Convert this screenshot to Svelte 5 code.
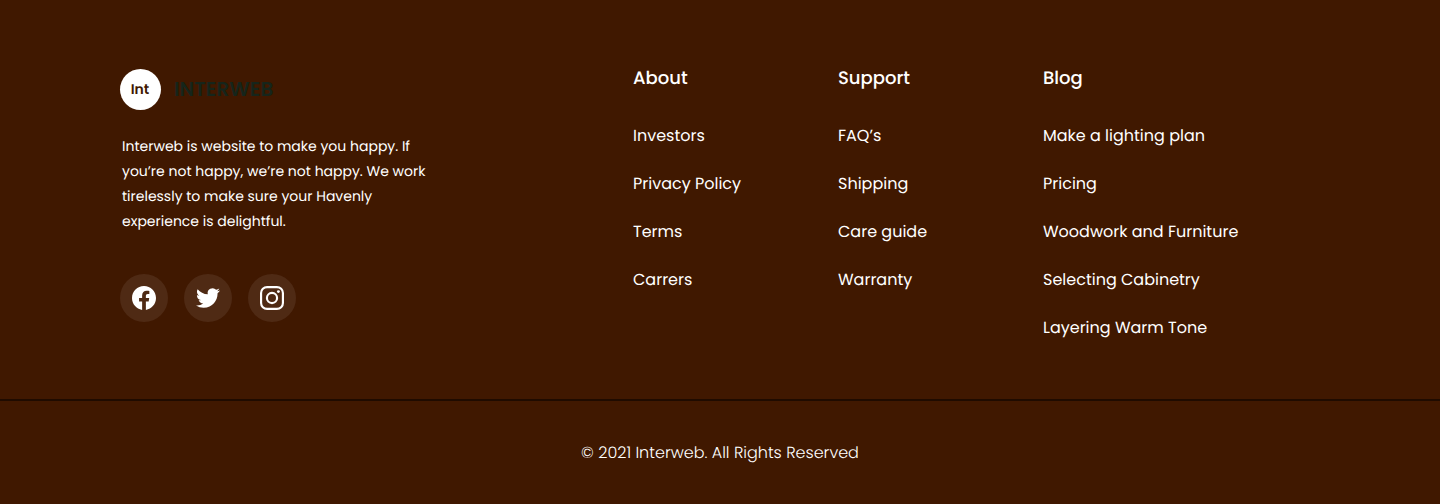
<script>
  const columns = [
    { title: 'About', links: ['Investors', 'Privacy Policy', 'Terms', 'Carrers'] },
    { title: 'Support', links: ['FAQ’s', 'Shipping', 'Care guide', 'Warranty'] },
    {
      title: 'Blog',
      links: ['Make a lighting plan', 'Pricing', 'Woodwork and Furniture', 'Selecting Cabinetry', 'Layering Warm Tone']
    }
  ];
  const lines = [
    'Interweb is website to make you happy. If',
    'you’re not happy, we’re not happy. We work',
    'tirelessly to make sure your Havenly',
    'experience is delightful.'
  ];
</script>

<footer>
  <div class="top">
    <section class="brand">
      <div class="logo">
        <span class="mark">Int</span>
        <span class="name">INTERWEB</span>
      </div>
      <p>
        {#each lines as line}
          <span>{line}</span>
        {/each}
      </p>
      <div class="social">
        <span class="bubble">
          <svg viewBox="0 0 24 24" aria-label="Facebook"><path d="M24 12.073c0-6.627-5.373-12-12-12s-12 5.373-12 12c0 5.99 4.388 10.954 10.125 11.854v-8.385H7.078v-3.47h3.047V9.43c0-3.007 1.792-4.669 4.533-4.669 1.312 0 2.686.235 2.686.235v2.953H15.83c-1.491 0-1.956.925-1.956 1.874v2.25h3.328l-.532 3.47h-2.796v8.385C19.612 23.027 24 18.062 24 12.073z" /></svg>
        </span>
        <span class="bubble">
          <svg viewBox="0 0 24 24" aria-label="Twitter"><path d="M23.953 4.57a10 10 0 01-2.825.775 4.958 4.958 0 002.163-2.723c-.951.555-2.005.959-3.127 1.184a4.92 4.92 0 00-8.384 4.482C7.69 8.095 4.067 6.13 1.64 3.162a4.822 4.822 0 00-.666 2.475c0 1.71.87 3.213 2.188 4.096a4.904 4.904 0 01-2.228-.616v.06a4.923 4.923 0 003.946 4.827 4.996 4.996 0 01-2.212.085 4.936 4.936 0 004.604 3.417 9.867 9.867 0 01-6.102 2.105c-.39 0-.779-.023-1.17-.067a13.995 13.995 0 007.557 2.209c9.053 0 13.998-7.496 13.998-13.985 0-.21 0-.42-.015-.63A9.935 9.935 0 0024 4.59z" /></svg>
        </span>
        <span class="bubble">
          <svg viewBox="0 0 24 24" aria-label="Instagram"><rect x="1.08" y="1.08" width="21.84" height="21.84" rx="6" fill="none" stroke="#fff" stroke-width="2.16" /><circle cx="12" cy="12" r="5.08" fill="none" stroke="#fff" stroke-width="2.16" /><circle cx="18.4" cy="5.6" r="1.44" /></svg>
        </span>
      </div>
    </section>
    <nav>
      {#each columns as column}
        <div class="column">
          <h3>{column.title}</h3>
          <ul>
            {#each column.links as link}
              <li>{link}</li>
            {/each}
          </ul>
        </div>
      {/each}
    </nav>
  </div>
  <div class="bottom"><span>© 2021 Interweb. All Rights Reserved</span></div>
</footer>

<style>
  :global(body) { background: #401800; }
  footer {
    height: 504px;
    box-sizing: border-box;
    background: #401800;
    color: #fff;
    font-family: Poppins, Inter, "Open Sans", sans-serif;
    text-rendering: geometricPrecision;
    display: flex;
    flex-direction: column;
    overflow: hidden;
  }
  .top {
    display: grid;
    grid-template-columns: 513px 1fr;
    height: 399px;
    box-sizing: border-box;
    padding: 64px 120px 0;
    flex: none;
  }
  .logo {
    display: flex;
    align-items: center;
    gap: 13px;
    height: 41px;
    padding-top: 5px;
  }
  .mark {
    width: 41px;
    height: 41px;
    box-sizing: border-box;
    padding-right: 1px;
    border-radius: 50%;
    background: #fff;
    color: #401800;
    display: grid;
    place-items: center;
    font-size: 14px;
    font-weight: 600;
  }
  .name {
    color: #16251b;
    font-size: 20px;
    line-height: 30px;
    padding-bottom: 2px;
    font-weight: 600;
  }
  p {
    margin: 24px 0 0 2px;
    font-size: 14px;
    line-height: 25px;
  }
  p span { display: block; width: max-content; }
  .social {
    display: flex;
    gap: 16px;
    margin-top: 40px;
  }
  .bubble {
    width: 48px;
    height: 48px;
    border-radius: 50%;
    background: rgba(255, 255, 255, 0.08);
    display: grid;
    place-items: center;
  }
  svg { width: 24px; height: 24px; fill: #fff; display: block; }
  nav {
    display: grid;
    grid-template-columns: 205px 205px 1fr;
    padding-top: 1px;
  }
  h3 {
    margin: 0;
    font-size: 18px;
    line-height: 27px;
    font-weight: 500;
  }
  ul {
    list-style: none;
    margin: 32px 0 0;
    padding: 0;
    display: flex;
    flex-direction: column;
    gap: 24px;
  }
  li {
    font-size: 16px;
    line-height: 24px;
    white-space: nowrap;
  }
  .bottom {
    flex: 1;
    border-top: 2px solid #1f0b00;
    display: flex;
    justify-content: center;
    align-items: center;
    font-size: 16px;
    font-weight: 300;
  }
</style>
